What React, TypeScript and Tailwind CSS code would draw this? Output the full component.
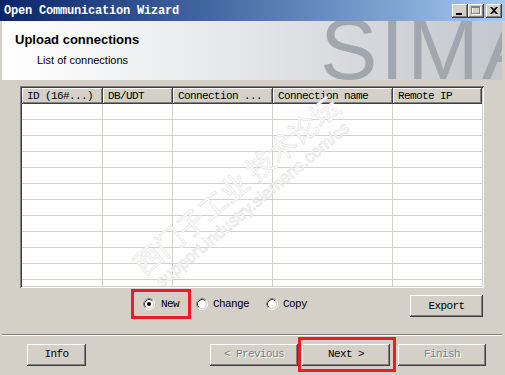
import React from "react";

const raised =
    "bg-[#d4d0c8] shadow-[inset_-1px_-1px_0_#404040,inset_1px_1px_0_#ffffff,inset_-2px_-2px_0_#808080,inset_2px_2px_0_#d4d0c8]";

const columns = ["ID (16#...)", "DB/UDT", "Connection ...", "Connection name", "Remote IP"];

const Radio = ({ checked }: { checked?: boolean }) => (
    <svg width="12" height="12" viewBox="0 0 12 12" className="shrink-0">
        <circle cx="6" cy="6" r="5.5" fill="none" stroke="#ffffff" />
        <path d="M 2.11 9.89 A 5.5 5.5 0 0 1 9.89 2.11" fill="none" stroke="#808080" />
        <circle cx="6" cy="6" r="4.5" fill="#ffffff" stroke="#d4d0c8" />
        <path d="M 2.82 9.18 A 4.5 4.5 0 0 1 9.18 2.82" fill="none" stroke="#404040" />
        {checked && <circle cx="6" cy="6" r="2" fill="#000000" />}
    </svg>
);

const Button = ({
    label,
    width,
    disabled,
}: {
    label: string;
    width: string;
    disabled?: boolean;
}) => (
    <div
        className={`flex h-[22px] shrink-0 items-center justify-center ${raised} ${width} ${
            disabled ? "text-[#808080] [text-shadow:1px_1px_0_#ffffff]" : "text-black"
        }`}
    >
        <span className="whitespace-pre text-[11px] tracking-[-0.6px]">{label}</span>
    </div>
);

const TitleButtons = () => (
    <div className="mr-[3px] flex items-center">
        <div className={`flex h-[14px] w-[16px] items-end justify-center pb-[3px] ${raised}`}>
            <div className="mr-[2px] h-[2px] w-[6px] bg-black" />
        </div>
        <div className={`flex h-[14px] w-[16px] items-center justify-center ${raised}`}>
            <svg width="10" height="9" viewBox="0 0 10 9">
                <rect x="1.5" y="1.5" width="8" height="7" fill="none" stroke="#ffffff" />
                <rect x="0.5" y="0.5" width="8" height="7" fill="none" stroke="#808080" />
                <line x1="0" y1="1.5" x2="9" y2="1.5" stroke="#808080" />
            </svg>
        </div>
        <div className={`ml-[2px] flex h-[14px] w-[16px] items-center justify-center ${raised}`}>
            <svg width="8" height="7" viewBox="0 0 8 7">
                <path d="M0 0h2l2 2 2-2h2L5 3.5 8 7H6L4 5 2 7H0l3-3.5z" fill="#000000" />
            </svg>
        </div>
    </div>
);

const App = () => {
    return (
        <div className="relative flex h-[375px] w-[505px] flex-col overflow-hidden bg-[#d4d0c8] font-['Liberation_Mono',monospace]">
            {/* title bar */}
            <div className="flex h-[21px] shrink-0 items-center justify-between bg-gradient-to-r from-[#0a246a] to-[#a6caf0] pl-[4px]">
                <span className="text-[12px] font-bold tracking-[-0.2px] text-white">
                    Open Communication Wizard
                </span>
                <TitleButtons />
            </div>

            {/* header */}
            <div className="relative ml-[2px] mr-[3px] h-[59px] shrink-0 overflow-hidden bg-gradient-to-r from-white via-[#e4e5e8] to-[#c4c7cd] pl-[13px] pt-[11px] font-['Liberation_Sans',Arial,sans-serif]">
                <div className="relative z-10 text-[13px] font-bold leading-[16px] text-black">Upload connections</div>
                <div className="relative z-10 ml-[22px] mt-[5px] text-[11px] leading-[14px] text-black">List of connections</div>
                <div className="absolute left-[318px] top-[-15px] select-none text-[86px] leading-none tracking-[3px] text-[#a2a6ae]">
                    SIMA
                </div>
            </div>

            {/* table */}
            <div className="relative ml-[20px] mt-[6px] h-[202px] w-[464px] shrink-0 overflow-hidden bg-white p-[2px] shadow-[inset_1px_1px_0_#808080,inset_-1px_-1px_0_#ffffff,inset_2px_2px_0_#404040,inset_-2px_-2px_0_#d4d0c8]">
                <div className="relative h-full w-full overflow-hidden">
                    <div className="grid grid-cols-[81px_70px_100px_120px_89px]">
                        {columns.map((c) => (
                            <div key={c} className={`flex h-[16px] items-center pl-[5px] ${raised}`}>
                                <span className="whitespace-pre text-[11px] tracking-[-0.6px]">{c}</span>
                            </div>
                        ))}
                    </div>
                    {Array.from({ length: 12 }).map((_, r) => (
                        <div key={r} className="grid grid-cols-[81px_70px_100px_120px_89px]">
                            {columns.map((c, i) => (
                                <div
                                    key={c}
                                    className={`h-[16px] border-b border-[#d4d0c8] ${i < 4 ? "border-r" : ""}`}
                                />
                            ))}
                        </div>
                    ))}
                    {/* watermark */}
                    <div className="pointer-events-none absolute left-[220px] top-[104px] flex -translate-x-1/2 -translate-y-1/2 rotate-[-40deg] flex-col items-center whitespace-nowrap text-white [-webkit-text-stroke:0.7px_#e4e4e4]">
                        <span className="font-['Noto_Sans_CJK_SC',sans-serif] text-[28px] leading-[34px]">
                            西门子工业 技术论坛
                        </span>
                        <span className="font-['Liberation_Sans',Arial,sans-serif] text-[17px] leading-[20px]">
                            support.industry.siemens.com/cs
                        </span>
                    </div>
                </div>
            </div>

            {/* options row */}
            <div className="mt-[1px] flex h-[30px] shrink-0 items-center pl-[131px] text-[11px] tracking-[-0.6px]">
                <div className="flex h-[30px] w-[60px] items-center border-[3px] border-[#ed1c24] pl-[9px]">
                    <Radio checked />
                    <span className="ml-[6px]">New</span>
                </div>
                <div className="ml-[5px] flex items-center">
                    <Radio />
                    <span className="ml-[5px]">Change</span>
                </div>
                <div className="ml-[17px] flex items-center">
                    <Radio />
                    <span className="ml-[5px]">Copy</span>
                </div>
                <div className="ml-auto mr-[22px] mt-[6px] self-start">
                    <Button label="Export" width="w-[73px]" />
                </div>
            </div>

            {/* separator */}
            <div className="ml-[2px] mr-[3px] mt-[15px] h-[2px] shrink-0 border-b border-t border-b-white border-t-[#808080]" />

            {/* wizard buttons */}
            <div className="mt-[1px] flex h-[35px] shrink-0 items-center">
                <div className="ml-[27px]">
                    <Button label="Info" width="w-[59px]" />
                </div>
                <div className="ml-[124px]">
                    <Button label="< Previous" width="w-[88px]" disabled />
                </div>
                <div className="flex h-[35px] w-[98px] items-center border-[3px] border-[#ed1c24] pl-[1px]">
                    <Button label="Next >" width="w-[88px]" />
                </div>
                <div className="ml-[2px]">
                    <Button label="Finish" width="w-[88px]" disabled />
                </div>
            </div>
        </div>
    );
};

export default App;
